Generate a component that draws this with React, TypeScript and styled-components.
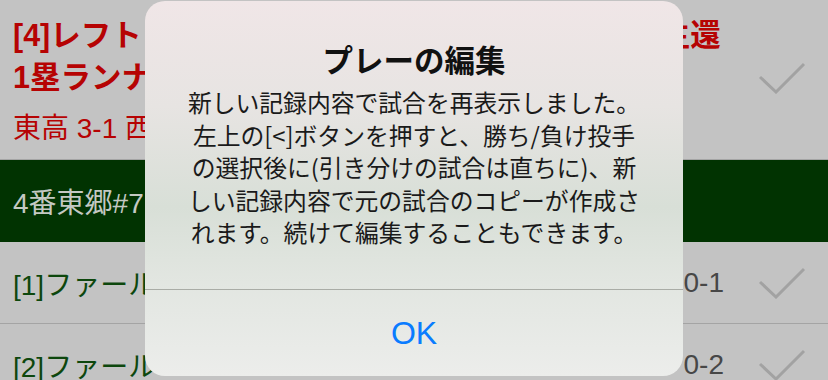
import styled, { createGlobalStyle } from "styled-components";

const GlobalStyle = createGlobalStyle`
  html, body {
    margin: 0;
    padding: 0;
    background: #c3c3c3;
  }
  body {
    font-family: "Liberation Sans", "Noto Sans CJK JP", sans-serif;
  }
`

const Screen = styled.div`
  position: relative;
  width: 828px;
  height: 380px;
  overflow: hidden;
  background: #c3c3c3;
`

const List = styled.ul`
  list-style: none;
  margin: 0;
  padding: 0;
`

const PlayRow = styled.li`
  display: flex;
  align-items: flex-start;
  height: 160px;
  padding: 14px 0 0 13px;
  box-sizing: border-box;
  border-bottom: 1px solid #a4a4a4;
`

const PlayText = styled.div`
  flex: 1;
  min-width: 0;
  color: #b60303;
`

const PlayTitle = styled.div`
  font-size: 30.5px;
  font-weight: 700;
  line-height: 42px;
  white-space: nowrap;
`

const PlayScore = styled.div`
  margin-top: 11px;
  font-size: 28px;
  line-height: 40px;
  white-space: nowrap;
`

const BatterBand = styled.li`
  display: flex;
  align-items: center;
  height: 82px;
  padding-left: 13px;
  background: #013301;
  color: #c4c9c3;
  font-size: 28px;
  white-space: nowrap;
`

const PitchRow = styled.li`
  display: flex;
  align-items: center;
  height: 82px;
  padding-left: 13px;
  box-sizing: border-box;
  border-bottom: 1px solid #a4a4a4;
`

const PitchLabel = styled.div`
  flex: 1;
  color: #0d470d;
  font-size: 28px;
  white-space: nowrap;
  overflow: hidden;
`

const Count = styled.div`
  color: #474747;
  font-size: 28px;
  margin-right: 34px;
`

const CheckBox = styled.div<{ $top?: number }>`
  width: 50px;
  height: 32px;
  margin-right: 20px;
  margin-top: ${p => p.$top ?? 0}px;
  flex-shrink: 0;
`

const Dialog = styled.div`
  position: absolute;
  left: 145px;
  top: 1px;
  width: 538px;
  height: 375px;
  border-radius: 20px;
  overflow: hidden;
  display: flex;
  flex-direction: column;
  background: linear-gradient(180deg, #f0e6e7 0%, #e7e4e2 28%, #d8dfd7 55%, #e2e6e1 75%, #ecedeb 100%);
  font-family: "Noto Sans CJK JP", sans-serif;
`

const DialogBody = styled.div`
  height: 289px;
  padding-top: 39px;
  box-sizing: border-box;
  border-bottom: 1px solid #a9aca6;
`

const DialogTitle = styled.h2`
  margin: 0;
  text-align: center;
  font-size: 30.5px;
  font-weight: 700;
  line-height: 38px;
  color: #111;
`

const DialogMessage = styled.p`
  margin: 8px 0 0;
  text-align: center;
  font-size: 23.8px;
  line-height: 32.5px;
  color: #1a1a1a;
  white-space: nowrap;
`

const DialogButton = styled.button`
  flex: 1;
  border: 0;
  background: transparent;
  color: #0a7cff;
  font-family: "Liberation Sans", sans-serif;
  font-size: 32px;
  padding: 0;
  cursor: pointer;
`

function Check({ top }: { top?: number }) {
  return (
    <CheckBox $top={top}>
      <svg width="50" height="32" viewBox="0 0 50 32">
        <path d="M2 15 L18 30 L46 2" fill="none" stroke="#a2a2a2" strokeWidth="3" />
      </svg>
    </CheckBox>
  )
}

const messageLines = [
  "新しい記録内容で試合を再表示しました。",
  "左上の[<]ボタンを押すと、勝ち/負け投手",
  "の選択後に(引き分けの試合は直ちに)、新",
  "しい記録内容で元の試合のコピーが作成さ",
  "れます。続けて編集することもできます。",
]

export default function App() {
  return (
    <Screen>
      <GlobalStyle />
      <List>
        <PlayRow>
          <PlayText>
            <PlayTitle>[4]レフトフライ、タッチアップで三塁ランナー生還</PlayTitle>
            <PlayTitle>1塁ランナーはそのまま</PlayTitle>
            <PlayScore>東高 3-1 西高</PlayScore>
          </PlayText>
          <Check top={48} />
        </PlayRow>
        <BatterBand>4番東郷#7 右投右打</BatterBand>
        <PitchRow>
          <PitchLabel>[1]ファール</PitchLabel>
          <Count>0-1</Count>
          <Check />
        </PitchRow>
        <PitchRow>
          <PitchLabel>[2]ファール</PitchLabel>
          <Count>0-2</Count>
          <Check />
        </PitchRow>
      </List>

      <Dialog>
        <DialogBody>
          <DialogTitle>プレーの編集</DialogTitle>
          <DialogMessage>
            {messageLines.map((line, i) => (
              <span key={i}>
                {line}
                {i < messageLines.length - 1 && <br />}
              </span>
            ))}
          </DialogMessage>
        </DialogBody>
        <DialogButton>OK</DialogButton>
      </Dialog>
    </Screen>
  )
}
